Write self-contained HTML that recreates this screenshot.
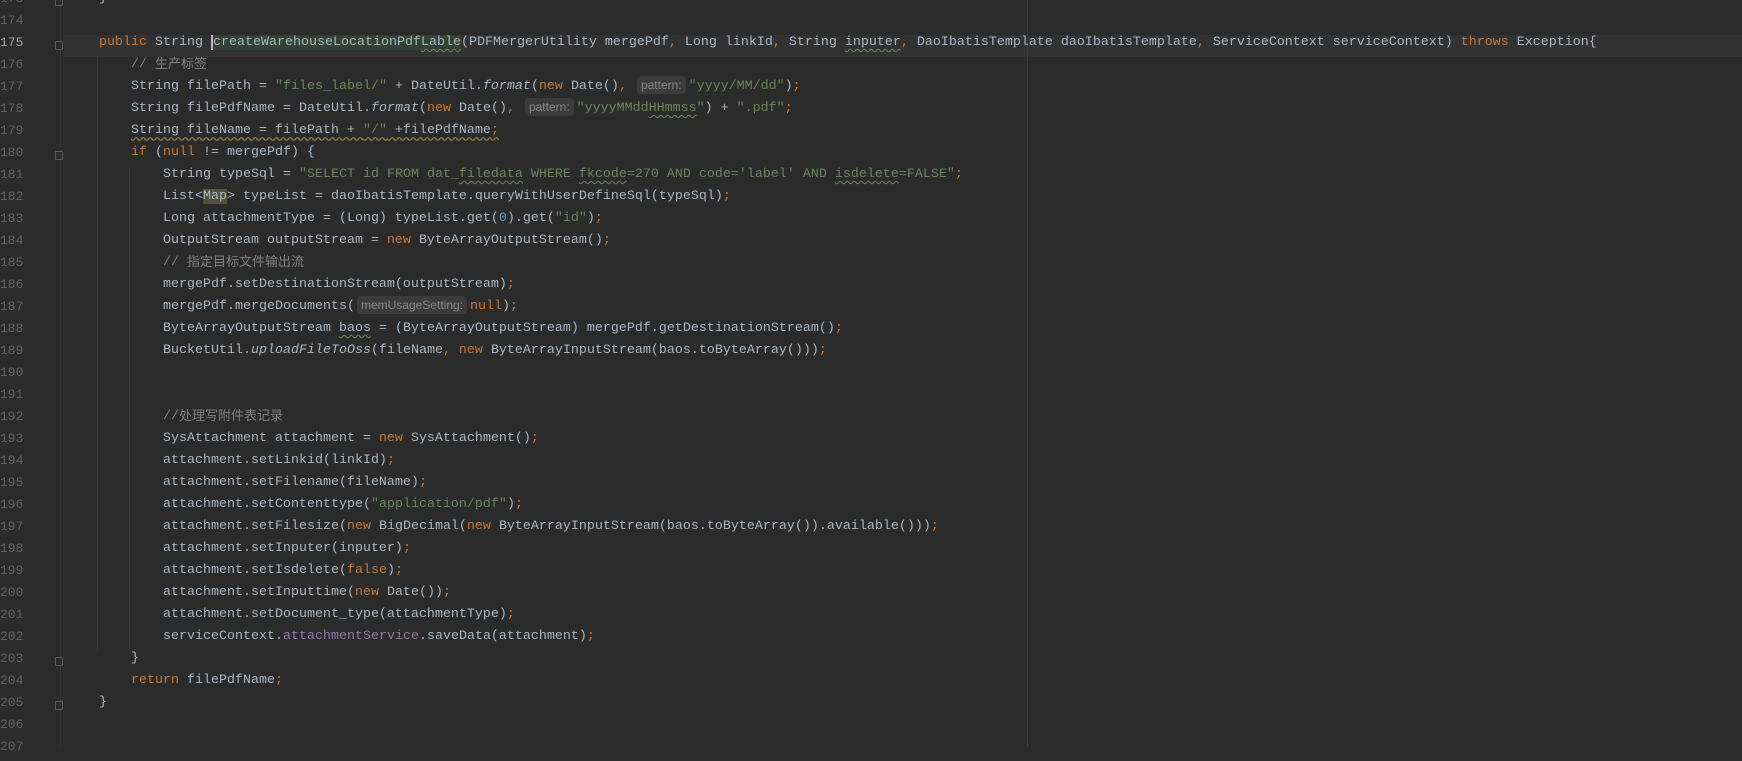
<!DOCTYPE html>
<html><head><meta charset="utf-8"><style>
html,body{margin:0;padding:0;background:#2b2b2b;width:1742px;height:747px;overflow:hidden}
.ln{position:absolute;left:0;width:40px;height:22px;line-height:22px;font:13px "Liberation Mono",monospace;color:#606366}
.c{position:absolute;left:99px;height:22px;line-height:22px;font:13.33px "Liberation Mono",monospace;color:#a9b7c6;white-space:pre}
.k{color:#cc7832}.s{color:#6a8759}.cm{color:#808080}.n{color:#6897bb}.f{color:#9876aa}.i{font-style:italic}
.cj{font-family:"Noto Sans CJK SC",sans-serif;font-size:13px;line-height:16px;display:inline-block;vertical-align:top;margin-top:3px;position:relative;top:-5px}
.h{display:inline-block;background:#3b3b3b;color:#8a8a8a;font:12px "Liberation Sans",sans-serif;border-radius:4px;padding:0 4px;height:18px;line-height:18px;margin:2px 3px 0 2px;vertical-align:top;position:relative;top:-5px}
.w{text-decoration:underline wavy #6a8759;text-decoration-thickness:1px;text-underline-offset:3px}
.vl{position:absolute;top:0;width:1px;height:747px;background:#3a3a3a}
.fold{position:absolute;left:55px;width:8px;height:9px;border:1px solid #5a5d5f;border-radius:1px;box-sizing:border-box}
</style></head><body>
<div style="position:absolute;left:64px;top:35px;width:1678px;height:22px;background:#323232"></div>
<div class="vl" style="left:60px;background:#353535"></div>
<div class="vl" style="left:1027px;background:#3c3c3c"></div>
<div class="vl" style="left:97px;top:57px;height:594px;background:#383838"></div>
<div class="vl" style="left:129px;top:167px;height:484px;background:#383838"></div>
<div class="fold" style="top:-3px"></div>
<div class="fold" style="top:41px"></div>
<div class="fold" style="top:151px"></div>
<div class="fold" style="top:657px"></div>
<div class="fold" style="top:701px"></div>

<div class="ln" style="top:-9px">173</div><div class="c" style="top:-9px">}</div>
<div class="ln" style="top:13px">174</div>
<div class="ln" style="top:35px;color:#a4a3a3">175</div><div class="c" style="top:35px"><span class="k">public </span>String <span style="background:#344134;border-left:2px solid #bbb">createWarehouseLocationPdf<span class="w">Lable</span></span>(PDFMergerUtility mergePdf<span class="k">, </span>Long linkId<span class="k">, </span>String <span class="w">inputer</span><span class="k">, </span>DaoIbatisTemplate daoIbatisTemplate<span class="k">, </span>ServiceContext serviceContext) <span class="k">throws </span>Exception{</div>
<div class="ln" style="top:57px">176</div><div class="c cm" style="top:57px">    // <span class="cj">生产标签</span></div>
<div class="ln" style="top:79px">177</div><div class="c" style="top:79px">    String filePath = <span class="s">"files_label/"</span> + DateUtil.<span class="i">format</span>(<span class="k">new </span>Date()<span class="k">, </span><span class="h">pattern:</span><span class="s">"yyyy/MM/dd"</span>)<span class="k">;</span></div>
<div class="ln" style="top:101px">178</div><div class="c" style="top:101px">    String filePdfName = DateUtil.<span class="i">format</span>(<span class="k">new </span>Date()<span class="k">, </span><span class="h">pattern:</span><span class="s">"yyyyMMdd<span class="w">HHmmss</span>"</span>) + <span class="s">".pdf"</span><span class="k">;</span></div>
<div class="ln" style="top:123px">179</div><div class="c" style="top:123px">    <span style="text-decoration:underline wavy #8a7a3a;text-underline-offset:3px">String fileName = filePath + <span class="s">"/"</span> +filePdfName<span class="k">;</span></span></div>
<div class="ln" style="top:145px">180</div><div class="c" style="top:145px">    <span class="k">if </span>(<span class="k">null </span>!= mergePdf) {</div>
<div class="ln" style="top:167px">181</div><div class="c" style="top:167px">        String typeSql = <span class="s">"SELECT id FROM dat_<span class="w">filedata</span> WHERE <span class="w">fkcode</span>=270 AND code='label' AND <span class="w">isdelete</span>=FALSE"</span><span class="k">;</span></div>
<div class="ln" style="top:189px">182</div><div class="c" style="top:189px">        List&lt;<span style="background:#52503a">Map</span>&gt; typeList = daoIbatisTemplate.queryWithUserDefineSql(typeSql)<span class="k">;</span></div>
<div class="ln" style="top:211px">183</div><div class="c" style="top:211px">        Long attachmentType = (Long) typeList.get(<span class="n">0</span>).get(<span class="s">"id"</span>)<span class="k">;</span></div>
<div class="ln" style="top:233px">184</div><div class="c" style="top:233px">        OutputStream outputStream = <span class="k">new </span>ByteArrayOutputStream()<span class="k">;</span></div>
<div class="ln" style="top:255px">185</div><div class="c cm" style="top:255px">        // <span class="cj">指定目标文件输出流</span></div>
<div class="ln" style="top:277px">186</div><div class="c" style="top:277px">        mergePdf.setDestinationStream(outputStream)<span class="k">;</span></div>
<div class="ln" style="top:299px">187</div><div class="c" style="top:299px">        mergePdf.mergeDocuments(<span class="h">memUsageSetting:</span><span class="k">null</span>)<span class="k">;</span></div>
<div class="ln" style="top:321px">188</div><div class="c" style="top:321px">        ByteArrayOutputStream <span class="w">baos</span> = (ByteArrayOutputStream) mergePdf.getDestinationStream()<span class="k">;</span></div>
<div class="ln" style="top:343px">189</div><div class="c" style="top:343px">        BucketUtil.<span class="i">uploadFileToOss</span>(fileName<span class="k">, new </span>ByteArrayInputStream(baos.toByteArray()))<span class="k">;</span></div>
<div class="ln" style="top:365px">190</div>
<div class="ln" style="top:387px">191</div>
<div class="ln" style="top:409px">192</div><div class="c cm" style="top:409px">        //<span class="cj">处理写附件表记录</span></div>
<div class="ln" style="top:431px">193</div><div class="c" style="top:431px">        SysAttachment attachment = <span class="k">new </span>SysAttachment()<span class="k">;</span></div>
<div class="ln" style="top:453px">194</div><div class="c" style="top:453px">        attachment.setLinkid(linkId)<span class="k">;</span></div>
<div class="ln" style="top:475px">195</div><div class="c" style="top:475px">        attachment.setFilename(fileName)<span class="k">;</span></div>
<div class="ln" style="top:497px">196</div><div class="c" style="top:497px">        attachment.setContenttype(<span class="s">"application/pdf"</span>)<span class="k">;</span></div>
<div class="ln" style="top:519px">197</div><div class="c" style="top:519px">        attachment.setFilesize(<span class="k">new </span>BigDecimal(<span class="k">new </span>ByteArrayInputStream(baos.toByteArray()).available()))<span class="k">;</span></div>
<div class="ln" style="top:541px">198</div><div class="c" style="top:541px">        attachment.setInputer(inputer)<span class="k">;</span></div>
<div class="ln" style="top:563px">199</div><div class="c" style="top:563px">        attachment.setIsdelete(<span class="k">false</span>)<span class="k">;</span></div>
<div class="ln" style="top:585px">200</div><div class="c" style="top:585px">        attachment.setInputtime(<span class="k">new </span>Date())<span class="k">;</span></div>
<div class="ln" style="top:607px">201</div><div class="c" style="top:607px">        attachment.setDocument_type(attachmentType)<span class="k">;</span></div>
<div class="ln" style="top:629px">202</div><div class="c" style="top:629px">        serviceContext.<span class="f">attachmentService</span>.saveData(attachment)<span class="k">;</span></div>
<div class="ln" style="top:651px">203</div><div class="c" style="top:651px">    }</div>
<div class="ln" style="top:673px">204</div><div class="c" style="top:673px">    <span class="k">return </span>filePdfName<span class="k">;</span></div>
<div class="ln" style="top:695px">205</div><div class="c" style="top:695px">}</div>
<div class="ln" style="top:717px">206</div>
<div class="ln" style="top:739px">207</div>
</body></html>
